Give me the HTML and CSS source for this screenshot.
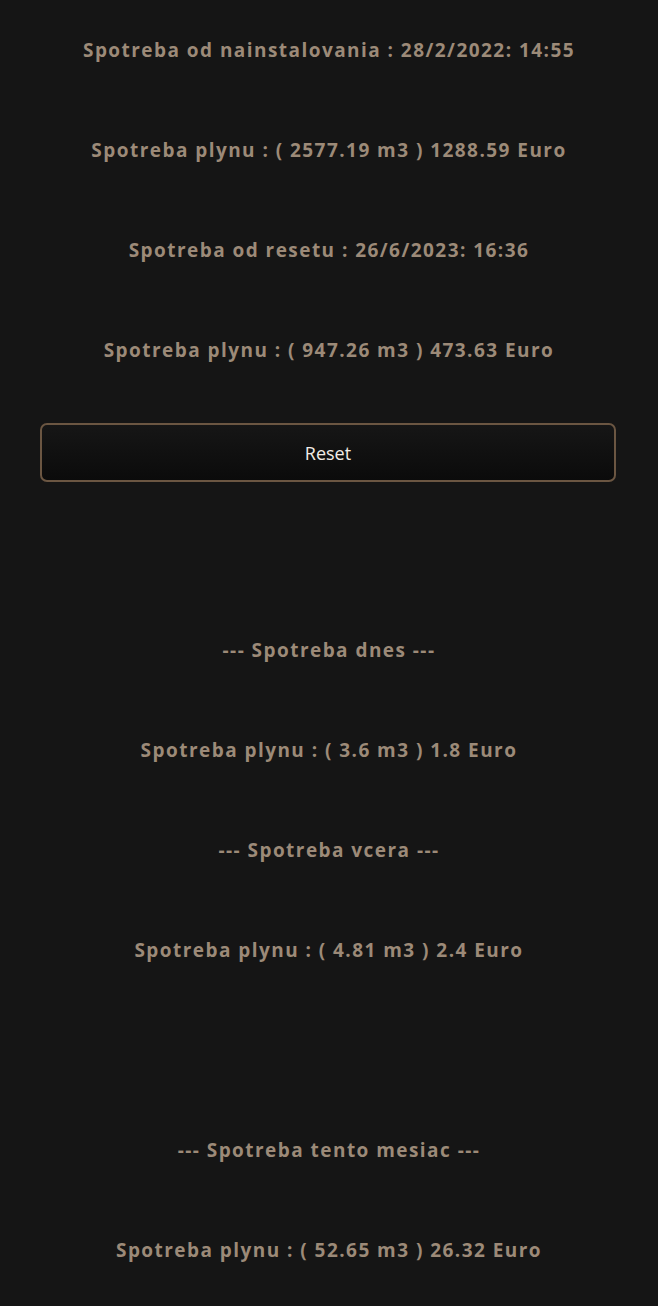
FILE: index.html
```html
<!DOCTYPE html>
<html>
<head>
<meta charset="utf-8">
<link rel="stylesheet" href="styles.css">
</head>
<body>
<main class="page">
  <div class="row"><span class="label">Spotreba od nainstalovania : 28/2/2022: 14:55</span></div>
  <div class="row"><span class="label">Spotreba plynu : ( 2577.19 m3 ) 1288.59 Euro</span></div>
  <div class="row"><span class="label">Spotreba od resetu : 26/6/2023: 16:36</span></div>
  <div class="row"><span class="label">Spotreba plynu : ( 947.26 m3 ) 473.63 Euro</span></div>
  <div class="row row-button"><button class="btn">Reset</button></div>
  <div class="row"></div>
  <div class="row"><span class="label">--- Spotreba dnes ---</span></div>
  <div class="row"><span class="label">Spotreba plynu : ( 3.6 m3 ) 1.8 Euro</span></div>
  <div class="row"><span class="label">--- Spotreba vcera ---</span></div>
  <div class="row"><span class="label">Spotreba plynu : ( 4.81 m3 ) 2.4 Euro</span></div>
  <div class="row"></div>
  <div class="row"><span class="label">--- Spotreba tento mesiac ---</span></div>
  <div class="row"><span class="label">Spotreba plynu : ( 52.65 m3 ) 26.32 Euro</span></div>
</main>
</body>
</html>
```

FILE: styles.css
```css
html, body {
  margin: 0;
  padding: 0;
  background: #151515;
}
body {
  font-family: "Open Sans", "Liberation Sans", sans-serif;
}
.page {
  display: flex;
  flex-direction: column;
}
.row {
  height: 100px;
  display: flex;
  align-items: center;
  justify-content: center;
}
.label {
  font-size: 19px;
  line-height: 26px;
  font-weight: 700;
  letter-spacing: 1.45px;
  color: #9c8a78;
  padding-bottom: 1px;
}
.row-button {
  align-items: flex-start;
  justify-content: flex-start;
  padding: 23px 0 0 40px;
  box-sizing: border-box;
}
.btn {
  width: 576px;
  height: 59px;
  border: 2px solid #6b5642;
  border-radius: 7px;
  background: linear-gradient(#161616, #0b0b0b);
  color: #f2ece6;
  font-family: "Open Sans", "Liberation Sans", sans-serif;
  font-size: 18px;
  font-weight: 400;
  cursor: pointer;
}
```
